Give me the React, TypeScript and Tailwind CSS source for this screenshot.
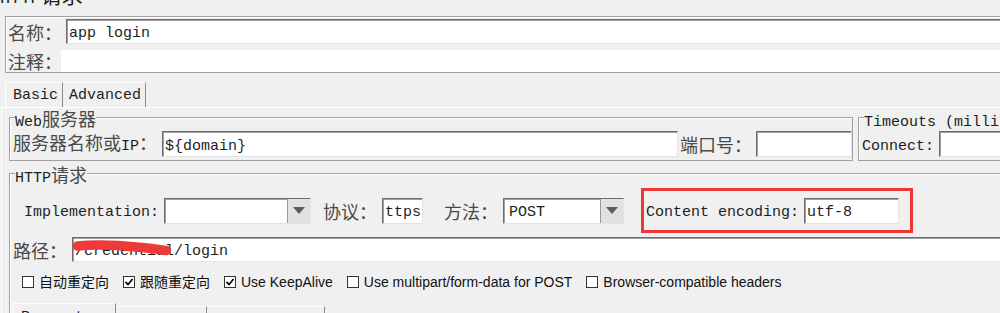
import React from 'react'

const mono = "font-['Liberation_Mono',monospace] text-[15px] leading-none text-[#1e1e1e] whitespace-nowrap"
// labels and field text sit a little lower in the original Swing look
const monoLow = `${mono} pt-[4px]`
const cjk = "font-['Noto_Sans_CJK_SC',sans-serif] text-[18px] leading-none text-[#4a4a4a] whitespace-nowrap"
const sans = "font-['Liberation_Sans','Noto_Sans_CJK_SC',sans-serif] text-[14px] leading-none text-[#111] whitespace-nowrap"
const sunken =
  'bg-white border border-t-[#6d6d6d] border-l-[#6d6d6d] border-r-[#e3e3e3] border-b-[#e3e3e3] shadow-[inset_1px_1px_0_#a0a0a0]'

function TextField({ value = '', className = '' }: { value?: string; className?: string }) {
  return (
    <input
      readOnly
      defaultValue={value}
      className={`${sunken} ${monoLow} block pl-[2px] outline-none ${className}`}
    />
  )
}

function Combo({ value = '', className = '' }: { value?: string; className?: string }) {
  return (
    <div className={`${sunken} h-[26px] flex items-stretch ${className}`}>
      <span className={`${monoLow} flex-1 flex items-center pl-[5px]`}>{value}</span>
      <span className="w-[23px] bg-[#e1e1e1] border-l border-[#9a9a9a] flex items-center justify-center">
        <svg width="12" height="7" viewBox="0 0 12 7">
          <path d="M0 0h12L6 7z" fill="#5c5c5c" />
        </svg>
      </span>
    </div>
  )
}

function Check({ label, checked = false }: { label: string; checked?: boolean }) {
  return (
    <label className="flex items-center gap-[5px]">
      <span className="w-[12px] h-[12px] border border-[#333] bg-white flex items-center justify-center">
        {checked && (
          <svg width="10" height="10" viewBox="0 0 10 10">
            <path d="M1.5 4.8L4 7.5L8.6 2" stroke="#000" strokeWidth="1.7" fill="none" />
          </svg>
        )}
      </span>
      <span className={sans}>{label}</span>
    </label>
  )
}

function Group({
  title,
  className = '',
  children,
}: {
  title: React.ReactNode
  className?: string
  children: React.ReactNode
}) {
  return (
    <fieldset className={`border border-[#a0a0a0] shadow-[inset_1px_1px_0_#fff] ${className}`}>
      <legend className="ml-[5px] h-[18px] pt-[1px] bg-[#f0f0f0] font-['Noto_Sans_CJK_SC',sans-serif] text-[18px] leading-none whitespace-nowrap">
        {title}
      </legend>
      {children}
    </fieldset>
  )
}

export default function App() {
  return (
    <div className="w-[1000px] h-[313px] overflow-hidden bg-[#f0f0f0]">
      <div className="w-[1200px]">
        {/* window title, mostly scrolled off */}
        <div className="h-[16px] overflow-hidden flex items-end">
          <div className="mb-[9px] leading-none whitespace-nowrap text-[#222]">
            <span className="font-['Liberation_Mono',monospace] text-[17px] leading-none">HTTP</span>
            <span className="font-['Noto_Sans_CJK_SC',sans-serif] text-[21px] leading-none">请求</span>
          </div>
        </div>

        {/* name / comments */}
        <div className="ml-[5px] w-[1100px] h-[57px] border border-[#a0a0a0] shadow-[inset_1px_1px_0_#fff]">
          <div className="flex items-center mt-[2px] h-[25px]">
            <span className={`${cjk} w-[60px] pl-[2px]`}>名称：</span>
            <TextField value="app login" className="w-[1000px] h-[25px]" />
          </div>
          <div className="flex items-center mt-[6px] h-[22px]">
            <span className={`${cjk} w-[55px] pl-[2px]`}>注释：</span>
            <div className="flex-1 h-full bg-white" />
          </div>
        </div>

        {/* Basic / Advanced tabs */}
        <div className="flex ml-[5px] mt-[9px] h-[25px]">
          <div className={`${mono} w-[58px] pl-[7px] flex items-center border-t border-l border-white border-r border-r-[#8a8a8a]`}>
            Basic
          </div>
          <div className={`${mono} w-[83px] pl-[6px] flex items-center border-t border-white border-r border-r-[#8a8a8a]`}>
            Advanced
          </div>
        </div>

        <div className="ml-[1px] border-t border-l border-white">
          <div className="flex items-start ml-[7px]">
            <Group
              title={
                <>
                  <span className={mono}>Web</span>
                  <span className={cjk}>服务器</span>
                </>
              }
              className="w-[846px] pb-[3px]"
            >
              <div className="flex items-center mt-[5px] h-[26px]">
                <span className="w-[152px] pl-[3px]">
                  <span className={cjk}>服务器名称或</span>
                  <span className={mono}>IP</span>
                  <span className={cjk}>：</span>
                </span>
                <TextField value="${domain}" className="w-[516px] h-[26px]" />
                <span className={`${cjk} ml-[2px] w-[76px]`}>端口号：</span>
                <TextField className="w-[96px] h-[26px]" />
              </div>
            </Group>

            <Group title={<span className={mono}>Timeouts (milliseconds)</span>} className="ml-[5px] w-[400px] pb-[3px]">
              <div className="flex items-center mt-[5px] h-[26px]">
                <span className={`${monoLow} w-[80px] pl-[3px]`}>Connect:</span>
                <TextField className="w-[120px] h-[26px]" />
              </div>
            </Group>
          </div>

          <Group
            title={
              <>
                <span className={mono}>HTTP</span>
                <span className={cjk}>请求</span>
              </>
            }
            className="ml-[7px] mt-[3px] w-[1100px] h-[220px]"
          >
            <div className="flex items-center mt-[6px] h-[45px]">
              <span className={`${monoLow} w-[154px] pl-[14px]`}>Implementation:</span>
              <Combo className="w-[147px]" />
              <span className={`${cjk} ml-[12px] w-[59px]`}>协议：</span>
              <TextField value="ttps" className="w-[41px] h-[26px]" />
              <span className={`${cjk} ml-[21px] w-[59px]`}>方法：</span>
              <Combo value="POST" className="w-[121px]" />
              <div className="ml-[17px] w-[272px] h-[45px] border-[3px] border-[#ee3636] flex items-center">
                <span className={`${monoLow} w-[160px] pl-[2px]`}>Content encoding:</span>
                <TextField value="utf-8" className="w-[95px] h-[26px]" />
              </div>
            </div>

            <div className="flex items-center mt-[4px] h-[25px]">
              <span className={`${cjk} w-[62px] pl-[3px]`}>路径：</span>
              <div className="relative flex">
                <TextField value="/credential/login" className="w-[1000px] h-[25px]" />
                <svg className="absolute left-0 top-0" width="100" height="22" viewBox="0 0 100 22">
                  <path
                    d="M5.5 9C20 7.5 45 8 70 10.5S90 13.5 94.5 13.5"
                    stroke="#f03a3a"
                    strokeWidth="9.5"
                    strokeLinecap="round"
                    fill="none"
                  />
                </svg>
              </div>
            </div>

            <div className="flex items-center mt-[10px] h-[20px] gap-[14px] pl-[12px]">
              <Check label="自动重定向" />
              <Check label="跟随重定向" checked />
              <Check label="Use KeepAlive" checked />
              <Check label="Use multipart/form-data for POST" />
              <Check label="Browser-compatible headers" />
            </div>

            <div className="flex items-start mt-[11px] ml-[3px]">
              <div className={`${monoLow} w-[103px] h-[24px] pl-[7px] flex items-center border-t border-l border-white border-r border-r-[#8a8a8a]`}>
                Parameters
              </div>
              <div className={`${monoLow} w-[91px] h-[24px] mt-[3px] pl-[6px] flex items-center border-t border-white border-r border-r-[#8a8a8a]`}>
                Body Data
              </div>
              <div className={`${monoLow} w-[118px] h-[24px] mt-[3px] pl-[6px] flex items-center border-t border-white border-r border-r-[#8a8a8a]`}>
                Files Upload
              </div>
            </div>
          </Group>
        </div>
      </div>
    </div>
  )
}
